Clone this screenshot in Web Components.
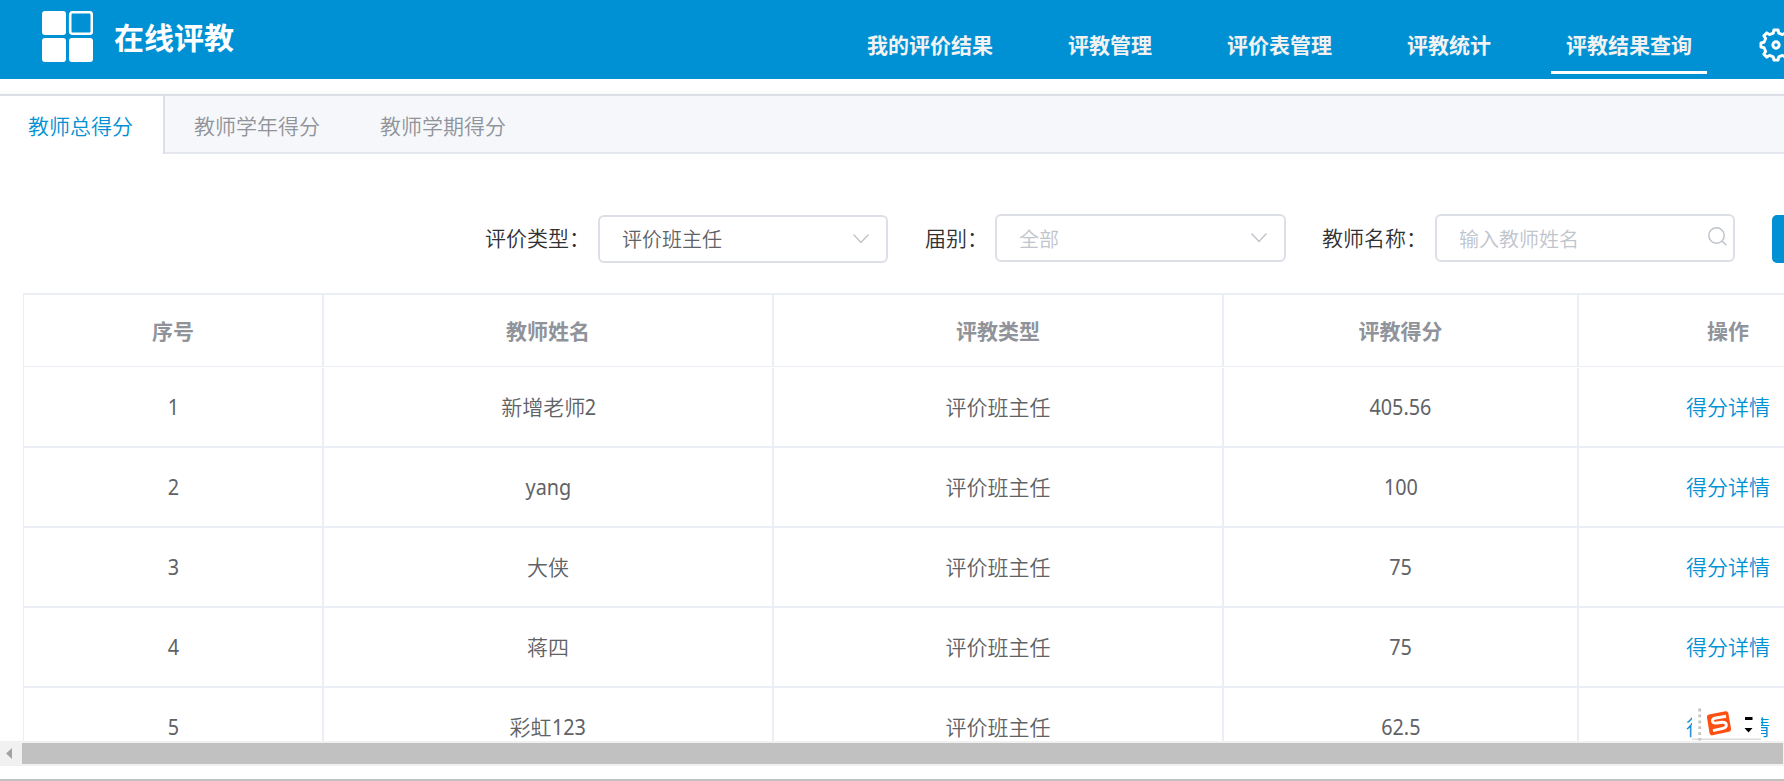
<!DOCTYPE html>
<html lang="zh-CN">
<head>
<meta charset="utf-8">
<title>在线评教</title>
<style>
  html, body { margin: 0; height: 100%; overflow: hidden; }
  body {
    background: #fff;
    color: #303133;
    font-family: "Noto Sans CJK SC", sans-serif;
    font-size: 21px;
    font-weight: 350;
  }
</style>
</head>
<body>
<rating-app></rating-app>

<script>
class BaseElement extends HTMLElement {
  constructor() {
    super();
    const shadowRoot = this.attachShadow({ mode: 'open' });
    shadowRoot.innerHTML = `<style>* { box-sizing: border-box; } ${this.styles()}</style>${this.markup()}`;
  }
  styles() { return ''; }
  markup() { return '<slot></slot>'; }
}

class AppLogo extends BaseElement {
  styles() {
    return `
      :host { display: flex; flex: none; align-items: flex-start; color: #fff; }
      svg { flex: none; display: block; margin: 11px 21px 0 42px; }
      h1 { width: 120px; margin: 14px 0 0; font-size: 30px; font-weight: 700; line-height: 44px; white-space: nowrap; }
    `;
  }
  markup() {
    return `
      <svg width="51" height="51" viewBox="0 0 51 51" fill="#fff">
        <rect width="24" height="24" rx="3"/>
        <rect x="28.2" y="1.2" width="21.6" height="21.6" rx="2.5" fill="none" stroke="#fff" stroke-width="2.6"/>
        <rect y="27" width="24" height="24" rx="3"/>
        <rect x="27" y="27" width="24" height="24" rx="3"/>
      </svg>
      <h1><slot></slot></h1>
    `;
  }
}
customElements.define('app-logo', AppLogo);

class NavItem extends BaseElement {
  styles() {
    return `
      :host {
        display: block;
        height: 74px;
        padding: 29px 15px 0;
        color: #f2f2f2;
        font-weight: 700;
        line-height: 30px;
        white-space: nowrap;
        border-bottom: 3px solid transparent;
        box-sizing: border-box;
      }
      :host([active]) { border-color: #fff; }
    `;
  }
}
customElements.define('nav-item', NavItem);

class AppHeader extends BaseElement {
  styles() {
    return `
      :host { display: flex; flex: none; height: 79px; background: #0091d4; overflow: hidden; }
      nav { display: flex; flex: none; gap: 45px; margin-left: 618px; }
      svg { flex: none; display: block; margin: 28px 0 0 52px; }
    `;
  }
  // outline of an eight toothed gear, as polar points round the centre
  gear() {
    const points = [];
    for (let i = 0; i < 8; i++) {
      [[-13, 12.2], [-8, 15.2], [8, 15.2], [13, 12.2]].forEach(([deg, r]) => {
        const a = (i * 45 + deg) * Math.PI / 180;
        points.push(`${(17 + r * Math.cos(a)).toFixed(2)},${(17 + r * Math.sin(a)).toFixed(2)}`);
      });
    }
    return points.join(' ');
  }
  markup() {
    return `
      <app-logo>在线评教</app-logo>
      <nav>
        <nav-item>我的评价结果</nav-item>
        <nav-item>评教管理</nav-item>
        <nav-item>评价表管理</nav-item>
        <nav-item>评教统计</nav-item>
        <nav-item active>评教结果查询</nav-item>
      </nav>
      <svg width="34" height="34" fill="none" stroke="#fff" stroke-width="2.9" stroke-linejoin="round">
        <polygon points="${this.gear()}"/>
        <circle cx="17" cy="17" r="3.2"/>
      </svg>
    `;
  }
}
customElements.define('app-header', AppHeader);

class TabItem extends BaseElement {
  styles() {
    return `
      :host {
        display: block;
        padding: 0 30px;
        color: #909399;
        line-height: 59px;
        white-space: nowrap;
      }
      :host([active]) {
        height: 58px;
        margin-right: -1px;
        padding: 0 30px 0 28px;
        background: #fff;
        color: #0091d4;
        border-right: 2px solid #dcdfe6;
      }
    `;
  }
}
customElements.define('tab-item', TabItem);

class TabBar extends BaseElement {
  styles() {
    return `
      :host {
        display: flex;
        flex: none;
        height: 60px;
        margin-top: 15px;
        background: linear-gradient(#e4e7ed, #e4e7ed) bottom / 100% 2px no-repeat #f5f7fa;
        border-top: 2px solid #dcdfe6;
        box-shadow: 0 -2px 4px rgba(0, 0, 0, .03);
        box-sizing: border-box;
      }
    `;
  }
}
customElements.define('tab-bar', TabBar);

class FormField extends BaseElement {
  styles() {
    return `
      :host { display: flex; flex: none; line-height: 46px; white-space: nowrap; }
      .label { width: var(--label-width); }
    `;
  }
  markup() {
    return `<span class="label">${this.getAttribute('label')}</span><slot></slot>`;
  }
}
customElements.define('form-field', FormField);

class InputBox extends BaseElement {
  styles() {
    return `
      :host {
        display: flex;
        justify-content: space-between;
        width: 291px;
        height: 48px;
        padding: 0 17px 0 22px;
        border: 2px solid #dcdfe6;
        border-radius: 6px;
        color: #606266;
        font-size: 20px;
        line-height: 45px;
        box-sizing: border-box;
      }
      :host([empty]) { color: #c0c4cc; }
      :host([icon="search"]) { width: 300px; padding-right: 6px; }
      svg { flex: none; fill: none; stroke: #c0c4cc; stroke-width: 1.5; }
    `;
  }
  markup() {
    const icon = this.getAttribute('icon') === 'search'
      ? '<svg width="20" height="44"><circle cx="9.5" cy="19.5" r="7.7"/><path d="M15 25l4.3 4.3"/></svg>'
      : '<svg width="16" height="44"><path d="M.5 17.5l7.5 8 7.5-8"/></svg>';
    return `<slot></slot>${icon}`;
  }
}
customElements.define('input-box', InputBox);

class FilterBar extends BaseElement {
  styles() {
    return `
      :host { display: flex; flex: none; align-items: flex-start; height: 79px; margin-top: 60px; padding-left: 485px; }
      form-field:nth-of-type(2) { margin-left: 37px; }
      form-field:nth-of-type(3) { margin-left: 36px; }
      .first { width: 290px; margin-top: 1px; line-height: 43px; }
      button {
        flex: none;
        width: 100px;
        height: 48px;
        margin: 1px 0 0 37px;
        border: 0;
        border-radius: 5px;
        background: #0091d4;
      }
    `;
  }
  markup() {
    return `
      <form-field label="评价类型：" style="--label-width: 113px"><input-box class="first">评价班主任</input-box></form-field>
      <form-field label="届别：" style="--label-width: 70px"><input-box empty>全部</input-box></form-field>
      <form-field label="教师名称：" style="--label-width: 113px"><input-box empty icon="search">输入教师姓名</input-box></form-field>
      <button></button>
    `;
  }
}
customElements.define('filter-bar', FilterBar);

class ScoreTable extends BaseElement {
  styles() {
    return `
      :host { display: block; flex: none; height: 448px; overflow: hidden; padding-left: 23px; }
      .table {
        width: 1856px;
        border-top: 2px solid #ebeef5;
        border-left: 1px solid #ebeef5;
        color: #606266;
      }
      .row { display: grid; grid-template-columns: 300px 450px 450px 355px 300px; height: 80px; border-bottom: 2px solid #ebeef5; }
      .row > * { border-right: 2px solid #ebeef5; text-align: center; line-height: 77px; white-space: pre; }
      .head { height: 72px; margin-bottom: 1px; border-width: 1px; color: #909399; font-weight: 700; }
      .head > * { line-height: 71px; }
      .latin {
        display: inline-block;
        margin: 0 -1.5px;
        font-family: "Noto Sans", "Noto Sans CJK SC", sans-serif;
        font-size: 22px;
        font-weight: 400;
        line-height: 30px;
        transform: scaleX(.9);
      }
      a { color: #0091d4; }
    `;
  }
  markup() {
    const rows = [
      ['1', '新增老师2', '405.56'],
      ['2', 'yang', '100'],
      ['3', '大侠', '75'],
      ['4', '蒋四', '75'],
      ['5', '彩虹123', '62.5']
    ];
    const mixed = text => text.replace(/[\w.]+/g, '<span class="latin">$&</span>');
    return `
      <div class="table">
        <div class="row head"><span>序号</span><span>教师姓名</span><span>评教类型</span><span>评教得分</span><span>操作</span></div>
        ${rows.map(([no, name, score]) => `<div class="row"><span>${mixed(no)}</span><span>${mixed(name)}</span><span>评价班主任</span><span>${mixed(score)}</span><span><a>得分详情</a></span></div>`).join('')}
      </div>
    `;
  }
}
customElements.define('score-table', ScoreTable);

class ScrollTrack extends BaseElement {
  styles() {
    return `
      :host { display: flex; flex: none; height: 25px; padding: 2px 1px 2px 0; background: #f1f1f1; box-sizing: border-box; }
      svg { flex: none; width: 22px; height: 21px; fill: #a3a3a3; }
      .thumb { flex: 1; background: #c1c1c1; }
    `;
  }
  markup() {
    return '<svg><path d="M6 10.5L12 5v11z"/></svg><div class="thumb"></div>';
  }
}
customElements.define('scroll-track', ScrollTrack);

// floating input method bar, sits over the last table row
class ImeBar extends BaseElement {
  styles() {
    return `
      :host { position: absolute; left: 1692px; top: 706px; width: 69px; height: 35px; background: #fff; }
      svg { display: block; }
    `;
  }
  markup() {
    return `
      <svg width="69" height="35">
        <path d="M0 33.3h69" stroke="#dedede" stroke-width="1.6"/>
        <path d="M7.7 2.6v32" stroke="#c4c4c4" stroke-width="2.8" stroke-dasharray="2.8 3.1"/>
        <path d="M17 8.5Q14.6 9 15 11.5L17.5 27Q18 29.8 20.5 29.3L37 25.7Q39.4 25 39 22.5L36.3 7Q35.7 5 33.5 5.3Z" fill="#fd4f12"/>
        <path d="M34 10.3L24 12Q20 12.700 20.5 15.3Q21 17.6 25 17L30 16.3Q33.8 16 34.3 18.8Q34.7 21.6 31 22.4L21 24.6" fill="none" stroke="#fff" stroke-width="2.9"/>
        <path d="M53 12.5h7.5" stroke="#000" stroke-width="3"/>
        <path d="M52.5 22h8l-4 4.5z"/>
      </svg>
    `;
  }
}
customElements.define('ime-bar', ImeBar);

class RatingApp extends BaseElement {
  styles() {
    return `
      :host { display: flex; flex-direction: column; height: 781px; overflow: hidden; box-sizing: border-box; border-bottom: 2px solid #c1c1c1; }
    `;
  }
  markup() {
    return `
      <app-header></app-header>
      <tab-bar>
        <tab-item active>教师总得分</tab-item>
        <tab-item>教师学年得分</tab-item>
        <tab-item>教师学期得分</tab-item>
      </tab-bar>
      <filter-bar></filter-bar>
      <score-table></score-table>
      <scroll-track></scroll-track>
      <ime-bar></ime-bar>
    `;
  }
}
customElements.define('rating-app', RatingApp);
</script>
</body>
</html>
